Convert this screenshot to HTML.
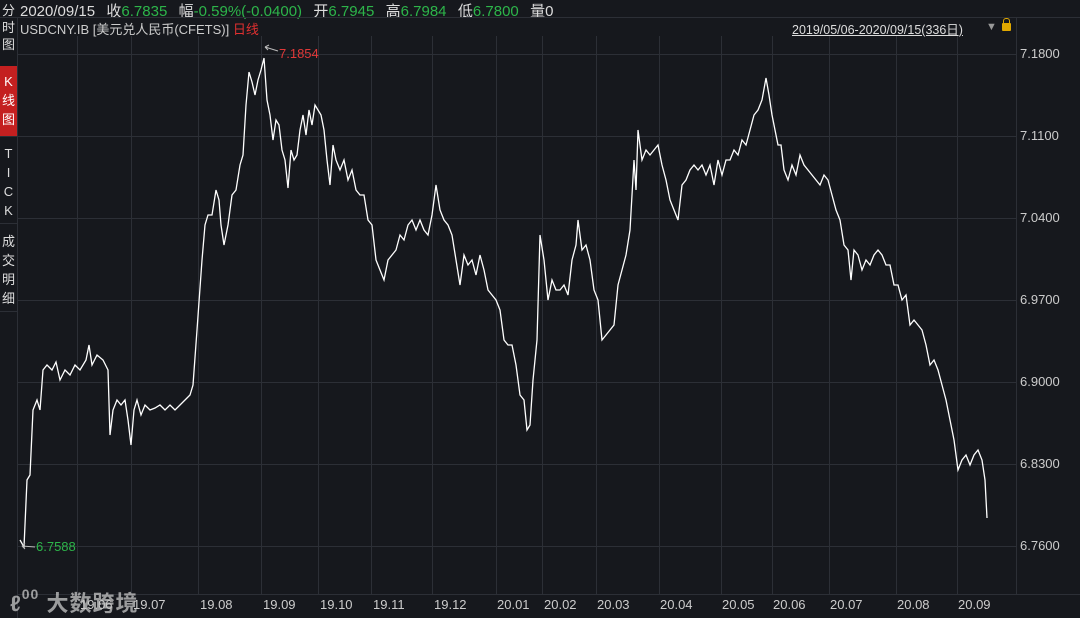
<!DOCTYPE html>
<html><head><meta charset="utf-8"><style>
body{margin:0;width:1080px;height:618px;background:#16181d;overflow:hidden;font-family:"Liberation Sans","Noto Sans CJK SC",sans-serif;color:#ccc;position:relative}
.hd{position:absolute;left:20px;top:0px;font-size:15px;color:#ddd;white-space:nowrap}
.hd b{font-weight:normal;margin-left:3px}
.g{color:#2db54a}.r{color:#e03030}
.sb{position:absolute;left:0;width:17px;font-size:13px;text-align:center;line-height:17px;color:#ddd}
.ax{position:absolute;font-size:13px;color:#ccc}
</style></head><body>
<div class="hd">2020/09/15 <b>&nbsp;收<span class="g">6.7835</span></b> <b>&nbsp;幅<span class="g">-0.59%(-0.0400)</span></b> <b>&nbsp;开<span class="g">6.7945</span></b> <b>&nbsp;高<span class="g">6.7984</span></b> <b>&nbsp;低<span class="g">6.7800</span></b> <b>&nbsp;量0</b></div>
<div style="position:absolute;left:20px;top:19px;font-size:13px;color:#ccc">USDCNY.IB [美元兑人民币(CFETS)] <span class="r">日线</span></div>
<div style="position:absolute;left:792px;top:19px;font-size:12.5px;color:#ddd;text-decoration:underline">2019/05/06-2020/09/15(336日)</div>
<div style="position:absolute;left:986px;top:21px;font-size:11px;color:#999">▼</div>
<div style="position:absolute;left:1002px;top:23px;width:9px;height:8px;background:#e0a800;border-radius:1px"></div>
<div style="position:absolute;left:1003px;top:18px;width:5px;height:6px;border:1px solid #e0a800;border-bottom:none;border-radius:3px 3px 0 0"></div>
<div class="sb" style="top:2px;height:60px">分<br>时<br>图</div>
<div class="sb" style="top:66px;height:70px;background:#c42020;padding-top:6px;box-sizing:border-box;line-height:19px;color:#fff">K<br>线<br>图</div>
<div class="sb" style="top:144px;line-height:19px">T<br>I<br>C<br>K</div>
<div class="sb" style="top:232px;line-height:19px">成<br>交<br>明<br>细</div>
<svg width="1080" height="618" style="position:absolute;left:0;top:0">
<g stroke="#2c2f36" stroke-width="1" fill="none">
<line x1="0" y1="17.5" x2="1080" y2="17.5"/>
<line x1="17.5" y1="17" x2="17.5" y2="618"/>
<line x1="1016.5" y1="17" x2="1016.5" y2="594"/>
<line x1="0" y1="136.5" x2="17" y2="136.5"/><line x1="0" y1="223.5" x2="17" y2="223.5"/><line x1="0" y1="311.5" x2="17" y2="311.5"/>
<line x1="17" y1="594.5" x2="1080" y2="594.5"/>
<line x1="18" y1="54.5" x2="1016" y2="54.5"/><line x1="18" y1="136.5" x2="1016" y2="136.5"/><line x1="18" y1="218.5" x2="1016" y2="218.5"/><line x1="18" y1="300.5" x2="1016" y2="300.5"/><line x1="18" y1="382.5" x2="1016" y2="382.5"/><line x1="18" y1="464.5" x2="1016" y2="464.5"/><line x1="18" y1="546.5" x2="1016" y2="546.5"/>
<path d="M77.5 36V594M131.5 36V594M198.5 36V594M261.5 36V594M318.5 36V594M371.5 36V594M432.5 36V594M496.5 36V594M542.5 36V594M596.5 36V594M659.5 36V594M721.5 36V594M772.5 36V594M829.5 36V594M896.5 36V594M957.5 36V594"/>
</g>
<polyline fill="none" stroke="#fff" stroke-width="1.3" points="20,540 24,547 27,480 30,475 33,410 37,400 40,410 43,370 47,365 52,370 56,362 60,380 65,370 70,375 75,365 80,370 86,360 89,345 92,365 97,355 103,360 108,370 110,435 113,410 117,400 121,405 125,400 128,420 131,445 134,410 137,400 141,415 145,405 150,410 155,408 160,405 165,410 170,405 175,410 180,405 185,400 190,395 193,385 197,330 202,260 205,225 208,215 212,215 216,190 219,200 221,225 224,245 228,225 232,195 236,190 240,165 243,155 246,105 249,72 252,82 255,95 258,80 261,70 264,58 267,100 270,115 273,140 276,120 279,125 282,150 285,160 288,188 291,150 294,160 297,155 300,130 303,115 306,135 309,110 312,125 315,105 318,110 321,115 324,130 327,160 330,185 333,145 336,160 340,170 344,160 348,180 352,170 356,190 360,195 364,195 368,220 372,225 376,260 380,270 384,280 388,260 392,255 396,250 400,235 404,240 408,225 412,220 416,230 420,220 424,230 428,235 432,215 436,185 440,210 444,220 448,225 452,235 456,260 460,285 464,255 468,265 472,260 476,275 480,255 484,270 488,290 492,295 496,300 500,310 504,340 508,345 512,345 516,365 520,395 524,400 527,430 530,425 533,380 537,340 540,235 544,260 548,300 552,280 556,290 560,290 564,285 568,295 572,260 576,245 578,220 582,250 586,245 590,260 594,290 598,300 602,340 606,335 610,330 614,325 618,285 622,270 626,255 630,230 634,160 636,190 638,130 642,160 646,150 650,155 654,150 658,145 662,165 666,180 670,200 674,210 678,220 682,185 686,180 690,170 694,165 698,170 702,165 706,175 710,165 714,185 718,160 722,175 726,160 730,160 734,150 738,155 742,140 746,145 750,130 754,115 758,110 762,100 766,78 769,95 772,115 775,130 778,145 781,145 784,170 788,180 792,165 796,175 800,155 804,165 808,170 812,175 816,180 820,185 824,175 828,180 832,195 836,210 840,220 844,245 848,250 851,280 854,250 858,255 862,270 866,260 870,265 874,255 878,250 882,255 886,265 890,265 894,285 898,285 902,300 906,295 910,325 914,320 918,325 922,330 926,345 930,365 934,360 938,370 942,385 946,400 950,420 954,440 958,470 962,460 966,455 970,465 974,455 978,450 982,460 985,480 987,518"/>
<path d="M265 47L278 51M265 47L269 45M265 47L268 50" stroke="#bbb" fill="none"/>
<path d="M22 546L35 547M22 546L25 543M22 546L25 549" stroke="#bbb" fill="none"/>
<text x="279" y="58" fill="#e03838" font-size="13" font-family="Liberation Sans">7.1854</text>
<text x="36" y="551" fill="#2db54a" font-size="13" font-family="Liberation Sans">6.7588</text>
</svg>
<div class="ax" style="left:1020px;top:46px">7.1800</div>
<div class="ax" style="left:1020px;top:128px">7.1100</div>
<div class="ax" style="left:1020px;top:210px">7.0400</div>
<div class="ax" style="left:1020px;top:292px">6.9700</div>
<div class="ax" style="left:1020px;top:374px">6.9000</div>
<div class="ax" style="left:1020px;top:456px">6.8300</div>
<div class="ax" style="left:1020px;top:538px">6.7600</div>
<div class="ax" style="left:80px;top:597px">19.06</div>
<div class="ax" style="left:133px;top:597px">19.07</div>
<div class="ax" style="left:200px;top:597px">19.08</div>
<div class="ax" style="left:263px;top:597px">19.09</div>
<div class="ax" style="left:320px;top:597px">19.10</div>
<div class="ax" style="left:373px;top:597px">19.11</div>
<div class="ax" style="left:434px;top:597px">19.12</div>
<div class="ax" style="left:497px;top:597px">20.01</div>
<div class="ax" style="left:544px;top:597px">20.02</div>
<div class="ax" style="left:597px;top:597px">20.03</div>
<div class="ax" style="left:660px;top:597px">20.04</div>
<div class="ax" style="left:722px;top:597px">20.05</div>
<div class="ax" style="left:773px;top:597px">20.06</div>
<div class="ax" style="left:830px;top:597px">20.07</div>
<div class="ax" style="left:897px;top:597px">20.08</div>
<div class="ax" style="left:958px;top:597px">20.09</div>
<div style="position:absolute;left:10px;top:586px;font-size:22px;color:rgba(200,200,200,0.75);font-weight:bold;letter-spacing:1px">ℓ<span style="font-size:14px;vertical-align:top">00</span> 大数跨境</div>
</body></html>
